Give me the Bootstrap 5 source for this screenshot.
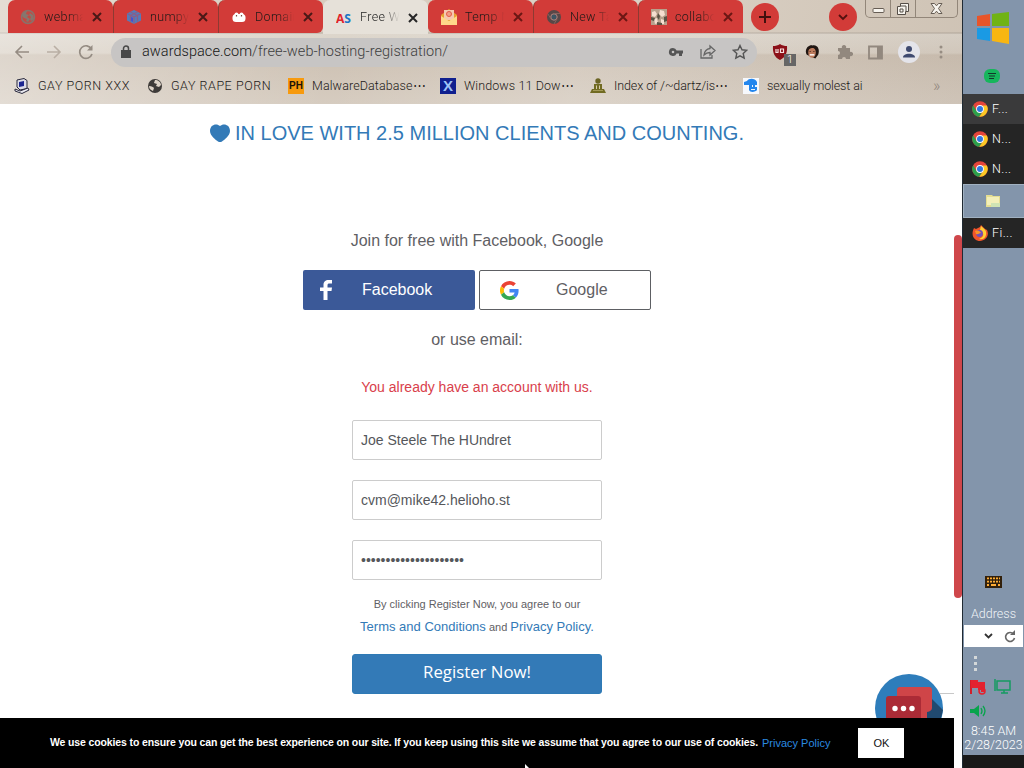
<!DOCTYPE html>
<html lang="en">
<head>
    <meta charset="UTF-8">
    <meta name="viewport" content="width=device-width, initial-scale=1.0">
    <title>Free Web Hosting Registration</title>
    <link rel="stylesheet" href="https://cdn.jsdelivr.net/npm/bootstrap@5.3.2/dist/css/bootstrap.min.css">
    <style>
        body { width: 1024px; height: 768px; font-family: "Liberation Sans", Arial, sans-serif; color: #5f6064; }
        svg { display: block; flex: none; }
        .browser { width: 962px; }
        .chrome-ui { font-family: Roboto, "Noto Sans", sans-serif; font-weight: 300; color: #1d1a18; white-space: nowrap; }

        /* Browser frame */
        .top-frame { height: 104px; background: linear-gradient(100deg, rgba(255,255,255,.35), rgba(255,255,255,0) 35%, rgba(255,255,255,.15) 60%, rgba(120,100,85,.08)), linear-gradient(#d6cbbd 0, #d6cbbd 32px, #b3a99d 33px, #ddd6cc 34px, #d8cfc3 53px, #cdc1b3 55px, #d6ccc0 104px); }
        .tab-strip { height: 33px; padding-left: 8px; }
        .tab-item { width: 105px; height: 33px; padding-left: 12px; padding-top: 1px; background: #d23b38; border-radius: 7px 7px 0 0; font-size: 12.5px; }
        .tab-item + .tab-item { border-left: 1px solid #8d3a32; }
        .tab-item .tab-name { width: 40px; margin-left: 8px; letter-spacing: .35px; -webkit-mask-image: linear-gradient(90deg, #000 60%, transparent 98%); mask-image: linear-gradient(90deg, #000 60%, transparent 98%); }
        .tab-item .tab-close { margin-left: 8px; }
        .tab-item.before-current { border-radius: 7px 7px 6px 0; }
        .tab-item.current { height: 34px; background: #e6e1d9; border-color: #e6e1d9; color: #1f1f1f; }
        .tab-item.after-current { border-radius: 7px 7px 0 6px; border-color: #d23b38; }
        .round-btn { width: 28px; height: 28px; border-radius: 50%; background: #d23b38; margin-top: 3px; }
        .add-tab { margin-left: 8px; }
        .tab-search { margin-left: 50px; }
        .win-buttons { width: 93px; height: 18px; margin-left: 8px; border: 1px solid #928679; border-top: 0; border-radius: 0 0 5px 5px; }
        .win-buttons > div { width: 25px; border-right: 1px solid #928679; }
        .win-buttons > div:last-child { width: 41px; border: 0; }

        .tool-bar { height: 37px; padding: 1px 12px 0 14px; }
        .nav-icons { gap: 16px; width: 97px; }
        .url-box { width: 646px; height: 29px; border-radius: 15px; background: #c7c5c4; padding: 0 9px; font-size: 14.5px; color: #3d3d3d; }
        .url-box .host { color: #151515; }
        .url-text { margin-left: 10px; letter-spacing: .05px; }
        .ext-icons { margin-left: 14px; gap: 15px; }
        .shield-count { right: -7px; bottom: -6px; width: 12px; height: 12px; background: #666; color: #fff; font-size: 11px; line-height: 12px; }
        .profile { width: 22px; height: 22px; border-radius: 50%; background: #e4e4ea; }

        .bookmark-bar { display: grid; grid-template-columns: 133px 141px 152px 150px 153px 190px 1fr; height: 34px; padding: 0 14px 2px; font-size: 12.5px; align-items: center; }
        .bookmark-bar > div { display: flex; align-items: center; gap: 8px; letter-spacing: .1px; }
        .bookmark-bar > .bm-caps { letter-spacing: .55px; }
        .bookmark-bar > .bm-tight { letter-spacing: -.1px; }
        .ph-logo { width: 16px; height: 16px; background: #f79a0e; color: #1c1208; font: bold 10px/16px "Liberation Sans", sans-serif; letter-spacing: 0; }
        .x-logo { width: 16px; height: 16px; background: #10208f; color: #9fc3f6; font: bold 15px/16px "Liberation Sans", sans-serif; letter-spacing: 0; }
        .more-marks { font-size: 16px; line-height: 16px; color: #91877d; }

        /* Registration page */
        .site-page { height: 664px; }
        .site-content { width: 954px; height: 614px; padding-top: 16px; }
        .love-line { font-size: 20px; line-height: 26px; color: #337ab7; gap: 5px; }
        .join-line { margin-top: 83px; font-size: 16px; line-height: 24px; }
        .social-row { margin-top: 17px; gap: 4px; }
        .social-btn { width: 172px; height: 40px; border-radius: 2px; font-size: 16px; }
        .facebook-btn { background: #3b5998; color: #fff; padding-left: 17px; }
        .facebook-btn span { margin-left: 30px; }
        .google-btn { border: 1px solid #5d5f63; padding-left: 20px; }
        .google-btn span { margin-left: 37px; }
        .or-line { margin-top: 18px; font-size: 16px; line-height: 24px; }
        .error-line { margin-top: 25px; font-size: 14px; line-height: 20px; color: #d9404b; }
        .signup-form { width: 250px; margin-top: 23px; }
        .signup-form .form-control { height: 40px; margin-bottom: 20px; padding: 0 8px; border: 1px solid #ccc; border-radius: 2px; font-size: 14px; color: #55575b; }
        .signup-form .pass-field { margin-bottom: 14px; }
        .terms { font-size: 11px; line-height: 21.5px; white-space: nowrap; }
        .terms a, .cookie-bar a { color: #337ab7; text-decoration: none; }
        .terms a { font-size: 13px; }
        .register-btn { height: 40px; margin-top: 16px; padding: 0 0 4px; border: 1px solid #2e7ab5; border-radius: 3px; background: #337ab7; color: #fff; font: 500 16.8px/1 "Open Sans", "Noto Sans", sans-serif; }
        .chat-bubble { right: 0; bottom: 0; }
        .cookie-bar { width: 954px; height: 50px; background: #000; color: #fff; padding-left: 50px; font-size: 10.5px; font-weight: bold; white-space: nowrap; }
        .cookie-bar .notice { width: 709px; letter-spacing: -.13px; }
        .cookie-bar a { margin-left: 3px; font-weight: normal; color: #2b8be0; font-size: 11px; }
        .ok-btn { width: 46px; height: 30px; margin-left: 28px; border: 0; border-radius: 0; background: #fff; color: #111; font-size: 11px; padding: 0; }
        .scroll-track { width: 8px; padding-top: 131px; }
        .scroll-thumb { height: 363px; border-radius: 4px; background: #cf474b; }
        .mouse-tip { left: 525px; top: 764px; }

        /* Vertical taskbar */
        .side-bar { width: 62px; background: #8395ab; border-left: 1px solid #202a33; font-family: Roboto, "Noto Sans", sans-serif; font-weight: 300; font-size: 12.5px; color: #fff; white-space: nowrap; }
        .start-cell { height: 58px; padding-left: 14px; padding-top: 12px; }
        .music-cell { height: 36px; padding-left: 21px; padding-top: 10px; }
        .task { height: 30px; padding-left: 9px; gap: 4px; background: #252525; letter-spacing: .4px; }
        .task.top { background: #3a3a3b; }
        .files-cell { height: 34px; padding-left: 22px; border: 1px solid #a1b1c1; border-right: 0; }
        .bar-gap { height: 328px; }
        .address-label { height: 49px; padding-top: 30px; line-height: 16px; color: #f0f4f8; }
        .address-box { width: 59px; height: 22px; margin-left: 1px; background: #fff; gap: 11px; padding-left: 20px; }
        .tray { height: 77px; padding: 9px 0 0 7px; }
        .clock { height: 31px; line-height: 14px; font-size: 12.5px; }
        .bar-end { height: 14px; background: #191919; }
    </style>
</head>
<body class="d-flex overflow-hidden bg-white m-0">
    <div class="browser d-flex flex-column flex-shrink-0 position-relative">
        <div class="top-frame chrome-ui">
            <div class="tab-strip d-flex align-items-start">
                <div class="tab-item d-flex align-items-center">
                    <svg width="16" height="16" viewBox="0 0 16 16"><circle cx="8" cy="8" r="6.500" fill="#c24a43" stroke="#8a716a" stroke-width="1.500"/><path d="M2 7c0-3 3-5 5-5l-1 3 3 1-2 2 3 2-2 3-2-1 1-2-3-1zM10 4l3 2 1 4-3 2-1-2 1-2-2-2z" fill="#86766e"/></svg>
                    <span class="tab-name overflow-hidden">webmaster</span>
                    <svg class="tab-close" width="10" height="10" viewBox="0 0 10 10"><path d="m1 1 8 8m0-8-8 8" stroke="#4a1917" stroke-width="2"/></svg>
                </div>
                <div class="tab-item d-flex align-items-center">
                    <svg width="16" height="16" viewBox="0 0 16 16"><path d="m8 1 7 3.500v7L8 15l-7-3.500v-7z" fill="#557bb8"/><path d="m1 4.500 7 3.500 7-3.500M8 8v7M4.500 3l7 3.500v6M11.500 3l-7 3.500v6" fill="none" stroke="#8c5d86" stroke-width="1.200"/><path d="m5 8 2 1v4l-2-1z" fill="#4552d1"/></svg>
                    <span class="tab-name overflow-hidden">numpy</span>
                    <svg class="tab-close" width="10" height="10" viewBox="0 0 10 10"><path d="m1 1 8 8m0-8-8 8" stroke="#4a1917" stroke-width="2"/></svg>
                </div>
                <div class="tab-item before-current d-flex align-items-center">
                    <svg width="16" height="16" viewBox="0 0 16 16"><rect x="1.500" y="5" width="13" height="8" rx="3.500" fill="#fff"/><circle cx="5.500" cy="5.500" r="2" fill="#fff"/><circle cx="10.500" cy="5.500" r="2" fill="#fff"/><path d="M5.500 6v1.500m5-1.500v1.500" stroke="#784e42" stroke-width="1.200"/></svg>
                    <span class="tab-name overflow-hidden">Domain</span>
                    <svg class="tab-close" width="10" height="10" viewBox="0 0 10 10"><path d="m1 1 8 8m0-8-8 8" stroke="#4a1917" stroke-width="2"/></svg>
                </div>
                <div class="tab-item current d-flex align-items-center">
                    <svg width="16" height="16" viewBox="0 0 16 16"><text x="0" y="13" font-family="Open Sans" font-size="12.500" font-weight="700" textLength="15" lengthAdjust="spacingAndGlyphs"><tspan fill="#e1242b">A</tspan><tspan fill="#1b74c5">S</tspan></text></svg>
                    <span class="tab-name overflow-hidden">Free Web</span>
                    <svg class="tab-close" width="10" height="10" viewBox="0 0 10 10"><path d="m1 1 8 8m0-8-8 8" stroke="#262626" stroke-width="2"/></svg>
                </div>
                <div class="tab-item after-current d-flex align-items-center">
                    <svg width="16" height="16" viewBox="0 0 16 16"><path d="m0 6 8-6 8 6v10H0z" fill="#e7a12f"/><path d="M3 1h10v10H3z" fill="#f6c9b0"/><path d="M0 7v9h16V7l-8 5z" fill="#ffd98a"/><circle cx="8" cy="5" r="2.500" fill="#f0a08a" stroke="#e45b48"/></svg>
                    <span class="tab-name overflow-hidden">Temp Mail</span>
                    <svg class="tab-close" width="10" height="10" viewBox="0 0 10 10"><path d="m1 1 8 8m0-8-8 8" stroke="#6b1714" stroke-width="2"/></svg>
                </div>
                <div class="tab-item d-flex align-items-center">
                    <svg width="16" height="16" viewBox="0 0 16 16"><circle cx="8" cy="8" r="7" fill="#584747"/><circle cx="8" cy="8" r="3.200" fill="#3c5563" stroke="#b5827b" stroke-width="1"/><path d="M8 4.500h6M5 10 2 5m9 5-3 5" stroke="#87605c"/></svg>
                    <span class="tab-name overflow-hidden">New Tab</span>
                    <svg class="tab-close" width="10" height="10" viewBox="0 0 10 10"><path d="m1 1 8 8m0-8-8 8" stroke="#6b1714" stroke-width="2"/></svg>
                </div>
                <div class="tab-item d-flex align-items-center">
                    <svg width="16" height="16" viewBox="0 0 16 16"><path d="M0 0h16v16H0z" fill="#b8a08c"/><path d="m1 3 3-1 2 3-2 3-3-1zm8-2 4 1 1 4-3 2-3-3zM3 10l3-1 1 5-3 1zm7 0 3 1v4h-3z" fill="#f6ded0"/><path d="m0 8 4 1-1 3-3-1zm7-4 2 3-1 4-2-3zm6 4 3-1v5l-3 1zM6 13l5 1v2H6z" fill="#5b5245"/></svg>
                    <span class="tab-name overflow-hidden">collabora</span>
                    <svg class="tab-close" width="10" height="10" viewBox="0 0 10 10"><path d="m1 1 8 8m0-8-8 8" stroke="#6b1714" stroke-width="2"/></svg>
                </div>
                <div class="round-btn add-tab d-flex align-items-center justify-content-center">
                    <svg width="12" height="12" viewBox="0 0 12 12"><path d="M6 0v12M0 6h12" stroke="#42100e" stroke-width="2"/></svg>
                </div>
                <div class="round-btn tab-search d-flex align-items-center justify-content-center">
                    <svg width="10" height="8" viewBox="0 0 10 8"><path d="m1 2 4 4 4-4" fill="none" stroke="#54110f" stroke-width="1.800"/></svg>
                </div>
                <div class="win-buttons d-flex">
                    <div class="d-flex align-items-center justify-content-center"><svg width="13" height="14" viewBox="0 0 13 14"><rect x="1" y="6.500" width="11" height="4" rx="1" fill="#f7f4ee" stroke="#665d54"/></svg></div>
                    <div class="d-flex align-items-center justify-content-center"><svg width="14" height="14" viewBox="0 0 14 14"><path d="M4.500 1.500h8v8h-3v3h-8v-8h3z" fill="#f7f4ee" stroke="#554e47"/><path d="M4 7h3v3H4zM5 4h5v5" fill="none" stroke="#554e47"/></svg></div>
                    <div class="d-flex align-items-center justify-content-center"><svg width="13" height="13" viewBox="0 0 13 13"><path d="M1 1.500h3.500l2 2.300 2-2.300H12L8.500 6.500 12 11.500H8.500l-2-2.300-2 2.300H1L4.500 6.500z" fill="#f7f4ee" stroke="#665d54"/></svg></div>
                </div>
            </div>

            <div class="tool-bar d-flex align-items-center">
                <div class="nav-icons d-flex align-items-center flex-shrink-0">
                    <svg width="16" height="16" viewBox="0 0 16 16"><path d="M15 8H2m6-6L2 8l6 6" fill="none" stroke="#958c83" stroke-width="1.600"/></svg>
                    <svg width="16" height="16" viewBox="0 0 16 16"><path d="M1 8h13M8 2l6 6-6 6" fill="none" stroke="#b9afa4" stroke-width="1.600"/></svg>
                    <svg width="16" height="16" viewBox="0 0 16 16"><path d="M13.500 5A6.300 6.300 0 1 0 14 10" fill="none" stroke="#958c83" stroke-width="1.700"/><path d="M14.500 1v5.500H9z" fill="#958c83"/></svg>
                </div>
                <div class="url-box d-flex align-items-center flex-shrink-0">
                    <svg width="12" height="14" viewBox="0 0 12 14"><path d="M1 5h10v8H1z" fill="#484848"/><path d="M3.500 6V3.500a2.500 2.500 0 0 1 5 0V6" fill="none" stroke="#484848" stroke-width="1.500"/></svg>
                    <span class="url-text"><span class="host">awardspace.com</span>/free-web-hosting-registration/</span>
                    <div class="d-flex align-items-center gap-3 ms-auto">
                        <svg width="16" height="14" viewBox="0 0 16 14"><path d="M5 3a4 4 0 1 0 3.600 5.500H11V11h3V8.500h1v-3H8.600A4 4 0 0 0 5 3zm0 2.700a1.300 1.300 0 1 1 0 2.600 1.300 1.300 0 0 1 0-2.600z" fill="#555"/></svg>
                        <svg width="16" height="16" viewBox="0 0 16 16"><path d="M1 5v9h11v-3M10 2l5 4.500-5 4.500V8.500C7 8.500 5.500 9.500 4 11c.5-3.500 2.500-6 6-6.500z" fill="none" stroke="#666" stroke-width="1.300"/></svg>
                        <svg width="16" height="16" viewBox="0 0 16 16"><path d="m8 1.500 2 4.300 4.700.5-3.500 3.200 1 4.700L8 11.800l-4.200 2.400 1-4.700L1.300 6.300 6 5.800z" fill="none" stroke="#555" stroke-width="1.400"/></svg>
                    </div>
                </div>
                <div class="ext-icons d-flex align-items-center flex-shrink-0">
                    <div class="position-relative">
                        <svg width="18" height="16" viewBox="0 0 18 16"><path d="M9 0c2 1.500 4.500 2 7 2 .5 6-1 11-7 14C3 13 1.500 8 2 2c2.500 0 5-.5 7-2z" fill="#8c1018"/><path d="M5 5v3.500h2V5m2.500 3.500V5h3v3.500z" fill="none" stroke="#f7dfdf" stroke-width="1.200"/></svg>
                        <span class="shield-count position-absolute text-center">1</span>
                    </div>
                    <svg width="17" height="18" viewBox="0 0 18 18"><path d="M3 12C0 7 4 1 9 2c6-1 8 5 6 10l-3 4z" fill="#211713"/><ellipse cx="8.500" cy="9.500" rx="4" ry="5.700" fill="#bd7b5d"/><path d="M5 6c3-1 5-2 7 0l1-2-6-2-3 4z" fill="#211713"/><path d="M6 12h5" stroke="#fff" stroke-width="1.500"/><path d="M6 8.500h1m3 0h1" stroke="#2b160e"/></svg>
                    <svg width="17" height="17" viewBox="0 0 17 17"><path d="M2 4h4a2.200 2.200 0 1 1 4 0h4v4a2.200 2.200 0 1 1 0 4v3h-4a2 2 0 1 0-4 0H2v-4a2 2 0 1 0 0-4z" fill="#92887e"/></svg>
                    <svg width="15" height="15" viewBox="0 0 15 15"><path d="M1 1.500h13v12H1z" fill="none" stroke="#92887e" stroke-width="1.800"/><path d="M9 1h5v13H9z" fill="#92887e"/></svg>
                    <div class="profile d-flex align-items-center justify-content-center"><svg width="14" height="14" viewBox="0 0 14 14"><circle cx="7" cy="4" r="3" fill="#3f4a70"/><path d="M1 12.500c0-5 12-5 12 0z" fill="#3f4a70"/></svg></div>
                    <svg class="ms-1" width="4" height="14" viewBox="0 0 4 14"><g fill="#978d83"><circle cx="2" cy="2" r="1.500"/><circle cx="2" cy="7" r="1.500"/><circle cx="2" cy="12" r="1.500"/></g></svg>
                </div>
            </div>

            <div class="bookmark-bar">
                <div class="bm-caps">
                    <svg width="16" height="16" viewBox="0 0 16 16"><path d="m3 2 7-1.500 3 2v8L6 12 3 9z" fill="#dcdce8" stroke="#29293c"/><path d="m5 4 5-1v5L5 9z" fill="#1c2691"/><path d="m1 11 5 2 8-3 1 2-7 3.500-7-2.500z" fill="#ececf3" stroke="#29293c"/></svg>
                    <span>GAY PORN XXX</span>
                </div>
                <div class="bm-caps">
                    <svg width="16" height="16" viewBox="0 0 16 16"><circle cx="8" cy="8" r="7" fill="#3e3b39"/><path d="M2 8c3 0 4 1 5 2l-1 3c-3-1-4-3-4-5zM8 2l-1 3 3 1-1 2 3 1 2-2c0-3-3-5-6-5z" fill="#ddd3c7"/></svg>
                    <span>GAY RAPE PORN</span>
                </div>
                <div><div class="ph-logo text-center">PH</div><span>MalwareDatabase⋯</span></div>
                <div><div class="x-logo text-center">X</div><span>Windows 11 Dow⋯</span></div>
                <div class="bm-tight">
                    <svg width="16" height="16" viewBox="0 0 16 16"><circle cx="8" cy="3" r="2.700" fill="#6b6424"/><path d="M4 6h8v5h2l2 4H0l2-4h2z" fill="#716b22"/><path d="M6 7.500h1V11H6zm3 0h1V11H9z" fill="#d7ccaa"/><path d="M3 12.500h10" stroke="#a39a58"/></svg>
                    <span>Index of /~dartz/is⋯</span>
                </div>
                <div class="bm-tight">
                    <svg width="16" height="16" viewBox="0 0 16 16"><path d="M0 0h16v16H0z" fill="#f6f8fc"/><path d="M4 3c2-3 8-3 10 1v3H9v2h5v3c-1 2-7 3-8 0V7H1V4z" fill="#2386ed"/><path d="M8 11h4v1H8zM9 7h5v1.500H9z" fill="#e8f4ff"/><path d="M10 7h2v2h-2z" fill="#2386ed"/></svg>
                    <span>sexually molest ai</span>
                </div>
                <span class="more-marks">»</span>
            </div>
        </div>

        <div class="site-page d-flex">
            <div class="d-flex flex-column flex-shrink-0">
                <div class="site-content position-relative d-flex flex-column align-items-center overflow-hidden">
                    <div class="love-line d-flex align-items-center">
                        <svg width="20" height="18" viewBox="0 0 20 18"><path d="M10 2C7-1 0 0 0 7c0 5 6 9 8 10.500q2 1 4 0C14 16 20 12 20 7c0-7-7-8-10-5z" fill="#337ab7"/></svg>
                        <span>IN LOVE WITH 2.5 MILLION CLIENTS AND COUNTING.</span>
                    </div>
                    <div class="join-line">Join for free with Facebook, Google</div>
                    <div class="social-row d-flex">
                        <div class="social-btn facebook-btn d-flex align-items-center">
                            <svg width="12" height="20" viewBox="0 0 12 20"><path d="M3.500 20v-9H0V7.500h3.500V5c0-3.500 2-5 5-5H12v3.500H9.500c-1.500 0-2 .6-2 2v2H12L11.500 11h-4v9z" fill="#fff"/></svg>
                            <span>Facebook</span>
                        </div>
                        <div class="social-btn google-btn d-flex align-items-center">
                            <svg width="19" height="19" viewBox="0 0 48 48"><path fill="#EA4335" d="M24 9.500c3.540 0 6.710 1.220 9.210 3.600l6.850-6.850C35.900 2.380 30.470 0 24 0 14.620 0 6.510 5.380 2.560 13.220l7.980 6.190C12.430 13.720 17.740 9.500 24 9.500z"/><path fill="#4285F4" d="M46.980 24.550c0-1.570-.15-3.090-.38-4.550H24v9.020h12.940c-.58 2.960-2.260 5.480-4.780 7.180l7.730 6c4.510-4.180 7.090-10.360 7.090-17.650z"/><path fill="#FBBC05" d="M10.530 28.590a14.500 14.500 0 0 1 0-9.180l-7.980-6.190a24 24 0 0 0 0 21.560z"/><path fill="#34A853" d="M24 48c6.480 0 11.930-2.130 15.890-5.810l-7.730-6c-2.150 1.450-4.920 2.300-8.160 2.300-6.260 0-11.570-4.220-13.470-9.910l-7.980 6.190C6.510 42.620 14.620 48 24 48z"/></svg>
                            <span>Google</span>
                        </div>
                    </div>
                    <div class="or-line">or use email:</div>
                    <div class="error-line">You already have an account with us.</div>
                    <form class="signup-form">
                        <input type="text" class="form-control" value="Joe Steele The HUndret" aria-label="Name">
                        <input type="text" class="form-control" value="cvm@mike42.helioho.st" aria-label="Email">
                        <input type="password" class="form-control pass-field" value="passwordpasswordpassw" aria-label="Password">
                        <div class="terms text-center">By clicking Register Now, you agree to our<br><a href="#">Terms and Conditions</a> and <a href="#">Privacy Policy.</a></div>
                        <button type="button" class="register-btn w-100 d-flex align-items-center justify-content-center">Register Now!</button>
                    </form>
                    <svg class="chat-bubble position-absolute" width="80" height="46" viewBox="0 0 80 46">
                        <path d="M66 21.500h14" stroke="#c8c8c8"/>
                        <circle cx="35" cy="36" r="34" fill="#2e7dbb"/>
                        <path d="M58 27l11 11-2 8H45z" fill="#214a70"/>
                        <path d="M26 15h29q3 0 3 3v18q0 3-5 4v6H40l-17-20V18q0-3 3-3z" fill="#cf4548"/>
                        <path d="M15 24h29q3 0 3 3v19H12V27q0-3 3-3z" fill="#ab2b36"/>
                        <g fill="#fff"><circle cx="21" cy="36.500" r="2.700"/><circle cx="29.500" cy="36.500" r="2.700"/><circle cx="38" cy="36.500" r="2.700"/></g>
                    </svg>
                </div>
                <div class="cookie-bar d-flex align-items-center">
                    <div class="notice">We use cookies to ensure you can get the best experience on our site. If you keep using this site we assume that you agree to our use of cookies.</div>
                    <a href="#">Privacy Policy</a>
                    <button type="button" class="ok-btn">OK</button>
                </div>
            </div>
            <div class="scroll-track"><div class="scroll-thumb"></div></div>
        </div>
        <svg class="mouse-tip position-absolute" width="5" height="4" viewBox="0 0 5 4"><path d="M0 0v4h4z" fill="#fff"/></svg>
    </div>

    <div class="side-bar flex-shrink-0">
        <div class="start-cell">
            <svg width="33" height="32" viewBox="0 0 33 32"><path d="m0 4 13-2v12H0z" fill="#e8552a"/><path d="m15 2 17-2v14H15z" fill="#70b314"/><path d="M0 16h13v13L0 27z" fill="#1a9ae4"/><path d="M15 16h17v16l-17-3z" fill="#f8b612"/></svg>
        </div>
        <div class="music-cell">
            <svg width="16" height="16" viewBox="0 0 16 16"><rect y="1" width="16" height="14" rx="6" fill="#16b65c"/><path d="M4 5.500h8M5 8h6m-6 2.500h5" stroke="#12392a" stroke-width="1.200"/></svg>
        </div>
        <div class="task top d-flex align-items-center"><svg width="16" height="16" viewBox="0 0 16 16"><use href="#chrome"/></svg><span>F...</span></div>
        <div class="task d-flex align-items-center"><svg width="16" height="16" viewBox="0 0 16 16"><use href="#chrome"/></svg><span>N...</span></div>
        <div class="task d-flex align-items-center"><svg width="16" height="16" viewBox="0 0 16 16"><use href="#chrome"/></svg><span>N...</span></div>
        <div class="files-cell d-flex align-items-center">
            <svg width="15" height="14" viewBox="0 0 15 14"><path d="M0 1h6l1 1h7v11H0z" fill="#e4dd92"/><path d="M1 3h12v8H1z" fill="#f3efb9"/><path d="M5 9h9v4H5z" fill="#cfe3b4"/></svg>
        </div>
        <div class="task d-flex align-items-center">
            <svg width="16" height="16" viewBox="0 0 16 16"><path d="m2 3 2 1 4-2 1-2 4 4 2 1c3 6-2 11-7 11S-2 11 2 3z" fill="#f1542b"/><path d="M9 1c3 3 6 4 5 9-1 4-4 5-7 4 6-2 5-7 1-9z" fill="#ffcf35"/><circle cx="7.500" cy="8.500" r="3.400" fill="#7350b8"/><path d="M3 6c3-1 5 0 6 2-2 0-3 2-5 1z" fill="#fb9428"/></svg>
            <span>Fi...</span>
        </div>
        <div class="bar-gap"></div>
        <div class="d-flex justify-content-center position-relative">
            <svg class="position-absolute" width="17" height="12" viewBox="0 0 17 12"><path d="M0 0h17v12H0z" fill="#32200b"/><path d="M2 2.500h13M2 5.500h13M2 9h2m2 0h5m2 0h2" stroke="#ffad35" stroke-width="2"/><path d="M4.500 1v6m3-6v6m3-6v6m3-6v6" stroke="#32200b"/><path d="M0 4h17" stroke="#32200b"/></svg>
        </div>
        <div class="address-label text-center">Address</div>
        <div class="address-box d-flex align-items-center">
            <svg width="9" height="7" viewBox="0 0 9 7"><path d="m1 1 3.500 3.500L8 1" fill="none" stroke="#333" stroke-width="1.800"/></svg>
            <svg width="12" height="13" viewBox="0 0 12 13"><path d="M9.500 4a4.500 4.500 0 1 0 1 4" fill="none" stroke="#666" stroke-width="1.600"/><path d="M6 5h5V0z" fill="#666"/></svg>
        </div>
        <div class="tray">
            <svg width="50" height="64" viewBox="0 0 50 64"><g fill="#d4d8d9"><path d="M4 0h3v3H4zm0 6h3v3H4zm0 6h3v3H4z"/></g><path d="M0 24h2v14H0z" fill="#d21e2a"/><path d="M1 24h7v2h7v10h-4v-2H8v-2H1z" fill="#e3222f"/><circle cx="12" cy="35" r="3" fill="none" stroke="#e3222f" stroke-width="1.500"/><path d="M27 25h13v9H27zm4 12h7m-4-3v3M25 23v12" fill="none" stroke="#169b62" stroke-width="1.500"/><path d="M0 53h4l5-4v12l-5-4H0z" fill="#08a44c"/><path d="M11 52q2 3 0 6m2-8q4 5 0 10" fill="none" stroke="#08a44c" stroke-width="1.300"/></svg>
        </div>
        <div class="clock text-center">8:45 AM<br>2/28/2023</div>
        <div class="bar-end"></div>
    </div>

    <svg width="0" height="0" class="position-absolute">
        <defs>
            <g id="chrome">
                <circle cx="8" cy="8" r="7.800" fill="#e5443a"/>
                <path d="M1.200 4.200A7.800 7.800 0 0 0 7.200 15.800L11 9.800 8 12 4.600 10z" fill="#2ca04b"/>
                <path d="M14.800 4.400A7.800 7.800 0 0 1 7.300 15.800l4.200-6-.5-5.400z" fill="#fbc925"/>
                <circle cx="8" cy="8" r="3.900" fill="#fff"/>
                <circle cx="8" cy="8" r="3" fill="#2f77e0"/>
            </g>
        </defs>
    </svg>
    <script src="https://cdn.jsdelivr.net/npm/bootstrap@5.3.2/dist/js/bootstrap.bundle.min.js"></script>
</body>
</html>
